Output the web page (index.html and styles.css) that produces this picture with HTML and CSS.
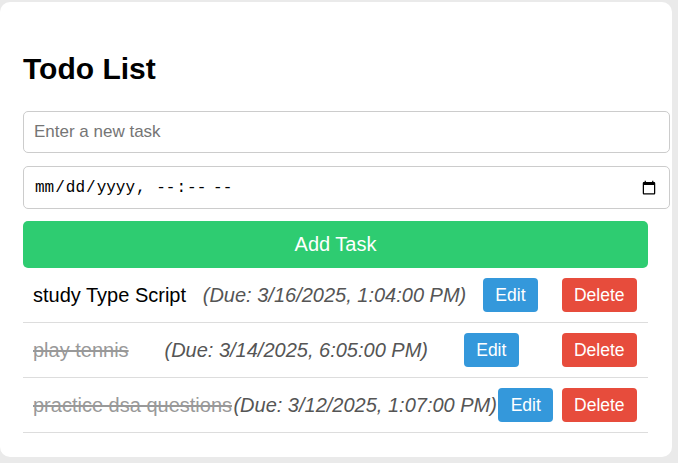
FILE: index.html
```html
<!DOCTYPE html>
<html lang="en">
<head>
<meta charset="utf-8">
<title>Todo List</title>
<link rel="stylesheet" href="styles.css">
</head>
<body>
  <div class="card">
    <h1 class="title">Todo List</h1>
    <input class="field" type="text" placeholder="Enter a new task">
    <input class="field date-field" type="datetime-local">
    <button class="add-btn">Add Task</button>
    <ul class="todo-list">
      <li class="todo-item">
        <span class="task">study Type Script</span>
        <span class="due">(Due: 3/16/2025, 1:04:00 PM)</span>
        <button class="btn edit">Edit</button>
        <button class="btn delete">Delete</button>
      </li>
      <li class="todo-item">
        <span class="task done">play tennis</span>
        <span class="due">(Due: 3/14/2025, 6:05:00 PM)</span>
        <button class="btn edit">Edit</button>
        <button class="btn delete">Delete</button>
      </li>
      <li class="todo-item">
        <span class="task done">practice dsa questions</span>
        <span class="due">(Due: 3/12/2025, 1:07:00 PM)</span>
        <button class="btn edit">Edit</button>
        <button class="btn delete">Delete</button>
      </li>
    </ul>
  </div>
</body>
</html>
```

FILE: styles.css
```css
html, body {
  margin: 0;
  padding: 0;
}
body {
  background: #eaeaea;
  font-family: "Liberation Sans", Arial, sans-serif;
  color: #000;
}
.card {
  background: #fff;
  width: 625px;
  margin: 2px 0 0 0;
  padding: 24px 24px 24px 23px;
  border-radius: 10px;
}
.title {
  font-size: 30px;
  line-height: 35px;
  font-weight: bold;
  margin: 25px 0 25px;
}
.field {
  display: block;
  box-sizing: border-box;
  width: 647px;
  height: 42px;
  padding: 0 10px;
  margin: 0 0 13px;
  border: 1px solid #ccc;
  border-radius: 5px;
  font-family: "Liberation Sans", Arial, sans-serif;
  font-size: 17px;
  color: #000;
  background: #fff;
}
.field::placeholder {
  color: #757575;
}
.date-field {
  height: 43px;
  margin-bottom: 12px;
  font-family: "Liberation Mono", monospace;
  font-size: 16px;
}
.add-btn {
  display: block;
  width: 625px;
  height: 47px;
  border: none;
  border-radius: 5px;
  background: #2ecc71;
  color: #fff;
  font-family: "Liberation Sans", Arial, sans-serif;
  font-size: 20px;
  padding: 0;
  margin: 0;
}
.todo-list {
  list-style: none;
  margin: 0;
  padding: 0;
}
.todo-item {
  display: flex;
  justify-content: space-between;
  align-items: center;
  padding: 10px 11px 10px 10px;
  border-bottom: 1px solid #ddd;
  font-size: 20px;
}
.task.done {
  color: #999;
  text-decoration: line-through;
}
.due {
  font-style: italic;
  color: #555;
}
.btn {
  height: 34px;
  border: none;
  border-radius: 4px;
  color: #fff;
  font-family: "Liberation Sans", Arial, sans-serif;
  font-size: 17.5px;
  line-height: 20px;
  padding: 0 12.4px;
  margin: 0;
}
.edit {
  background: #3498db;
}
.delete {
  background: #e74c3c;
  margin-left: 7px;
}
```
